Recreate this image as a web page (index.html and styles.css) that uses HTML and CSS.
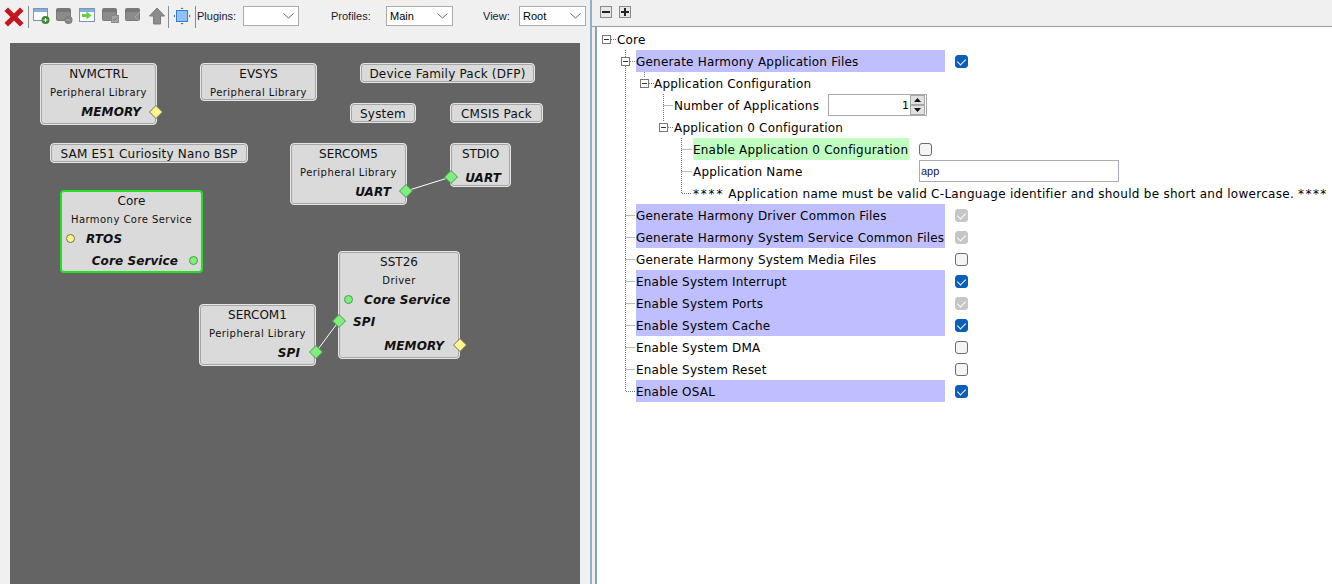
FILE: index.html
```html
<!DOCTYPE html>
<html lang="en">
<head>
    <meta charset="UTF-8">
    <meta name="viewport" content="width=device-width, initial-scale=1.0">
    <title>Project Graph</title>
    <link rel="stylesheet" href="styles.css">
</head>
<body>

    <!-- Project graph side -->
    <div id="graph-panel">
        <span class="tab-edge"></span>
        <div id="toolbar">
            <svg class="tool tool-close" width="20" height="20" viewBox="0 0 20 20">
                <path d="M4 4 L16 16 M16 4 L4 16" stroke="#c4161c" stroke-width="5" stroke-linecap="square"/>
            </svg>
            <span class="sep"></span>
            <svg class="tool" width="18" height="18" viewBox="0 0 18 18">
                <rect x="0.5" y="1.5" width="14" height="12" fill="#fff" stroke="#7d95ad"/>
                <rect x="1" y="2" width="13" height="3" fill="#86aedb"/>
                <circle cx="12.5" cy="13" r="4" fill="#3c8a34"/>
                <path d="M10.5 13 H14.5 M12.5 11 V15" stroke="#fff"/>
            </svg>
            <svg class="tool" width="18" height="18" viewBox="0 0 18 18">
                <rect x="0.5" y="1.5" width="14" height="12" rx="1" fill="#8b8b8b" stroke="#7a7a7a"/>
                <rect x="1" y="2" width="13" height="3" fill="#777"/>
                <circle cx="12.5" cy="13" r="4" fill="#808080"/>
                <path d="M10.5 13 H14.5" stroke="#b5b5b5"/>
            </svg>
            <svg class="tool" width="18" height="18" viewBox="0 0 18 18">
                <rect x="0.5" y="1.5" width="15" height="13" fill="#fff" stroke="#7d95ad"/>
                <rect x="1" y="2" width="14" height="3" fill="#86aedb"/>
                <path d="M3 7 H7.5 V4.5 L12.5 8.5 L7.5 12.5 V10 H3 Z" fill="#63d13f"/>
            </svg>
            <svg class="tool" width="18" height="18" viewBox="0 0 18 18">
                <rect x="0.5" y="1.5" width="14" height="12" rx="1" fill="#8b8b8b" stroke="#7a7a7a"/>
                <rect x="1" y="2" width="13" height="3" fill="#777"/>
                <rect x="9.5" y="8.5" width="7" height="7" fill="#a3a3a3" stroke="#8a8a8a"/>
                <path d="M11 12 L12.5 13.5 L15 10.5" stroke="#777" fill="none"/>
            </svg>
            <svg class="tool" width="18" height="18" viewBox="0 0 18 18">
                <rect x="0.5" y="1.5" width="14" height="12" rx="1" fill="#8b8b8b" stroke="#7a7a7a"/>
                <rect x="1" y="2" width="13" height="3" fill="#777"/>
                <path d="M15 5 L10 10 L14 14" stroke="#a9a9a9" fill="none"/>
            </svg>
            <svg class="tool" width="18" height="18" viewBox="0 0 18 18">
                <path d="M9 1 L16.5 9 H12.5 V17 H5.5 V9 H1.5 Z" fill="#8c8c8c" stroke="#7b7b7b"/>
            </svg>
            <span class="sep sep-a"></span>
            <svg class="tool tool-fit" width="18" height="18" viewBox="0 0 18 18">
                <rect x="3.5" y="3.5" width="11" height="11" fill="#8fc0f8" stroke="#3a7bd0"/>
                <path d="M9 0.5 L10.5 2 H7.5 Z M9 17.5 L7.5 16 H10.5 Z M0.5 9 L2 7.5 V10.5 Z M17.5 9 L16 10.5 V7.5 Z" fill="#2a66c4"/>
            </svg>
            <span class="sep sep-b"></span>
            <span class="tool-label label-plugins">Plugins:</span>
            <div class="combo combo-plugins">
                <span></span>
                <svg width="11" height="6" viewBox="0 0 11 6"><path d="M0.5 0.5 L5.5 5 L10.5 0.5" fill="none" stroke="#666"/></svg>
            </div>
            <span class="tool-label label-profiles">Profiles:</span>
            <div class="combo combo-main">
                <span>Main</span>
                <svg width="11" height="6" viewBox="0 0 11 6"><path d="M0.5 0.5 L5.5 5 L10.5 0.5" fill="none" stroke="#666"/></svg>
            </div>
            <span class="tool-label label-view">View:</span>
            <div class="combo combo-main">
                <span>Root</span>
                <svg width="11" height="6" viewBox="0 0 11 6"><path d="M0.5 0.5 L5.5 5 L10.5 0.5" fill="none" stroke="#666"/></svg>
            </div>
        </div>

        <div id="canvas">
            <div class="node node-nvmctrl">
                <div class="node-title">NVMCTRL</div>
                <div class="node-sub">Peripheral Library</div>
                <div class="port port-right">MEMORY</div>
            </div>
            <div class="node node-evsys">
                <div class="node-title">EVSYS</div>
                <div class="node-sub">Peripheral Library</div>
            </div>
            <div class="node node-flat node-dfp">Device Family Pack (DFP)</div>
            <div class="node node-flat node-system">System</div>
            <div class="node node-flat node-cmsis">CMSIS Pack</div>
            <div class="node node-flat node-bsp">SAM E51 Curiosity Nano BSP</div>
            <div class="node node-sercom5">
                <div class="node-title">SERCOM5</div>
                <div class="node-sub">Peripheral Library</div>
                <div class="port port-right">UART</div>
            </div>
            <div class="node node-stdio">
                <div class="node-title">STDIO</div>
                <div class="port port-right port-stdio">UART</div>
            </div>
            <div class="node node-selected node-core">
                <div class="node-title">Core</div>
                <div class="node-sub">Harmony Core Service</div>
                <div class="port port-left">RTOS</div>
                <div class="port port-right port-core">Core Service</div>
            </div>
            <div class="node node-sst26">
                <div class="node-title">SST26</div>
                <div class="node-sub">Driver</div>
                <div class="port port-left">Core Service</div>
                <div class="port port-left port-spi">SPI</div>
                <div class="port port-right port-mem">MEMORY</div>
            </div>
            <div class="node node-sercom1">
                <div class="node-title">SERCOM1</div>
                <div class="node-sub">Peripheral Library</div>
                <div class="port port-right">SPI</div>
            </div>

            <!-- wires and pins sit over the nodes -->
            <svg id="wires" width="570" height="541" viewBox="10 43 570 541">
                <path d="M406 191 L451 177 M316 352 L339 321" stroke="#fff" stroke-width="1"/>
                <path class="pin pin-green" d="M406 184.5 L412.5 191 L406 197.5 L399.5 191 Z"/>
                <path class="pin pin-green" d="M451 170.5 L457.5 177 L451 183.5 L444.5 177 Z"/>
                <path class="pin pin-green" d="M339 314.5 L345.5 321 L339 327.5 L332.5 321 Z"/>
                <path class="pin pin-green" d="M316 345.5 L322.5 352 L316 358.5 L309.5 352 Z"/>
                <path class="pin pin-yellow" d="M156 105.5 L162.5 112 L156 118.5 L149.5 112 Z"/>
                <path class="pin pin-yellow" d="M460 338.5 L466.5 345 L460 351.5 L453.5 345 Z"/>
                <circle class="pin pin-yellow" cx="70.5" cy="238.5" r="4"/>
                <circle class="pin pin-green" cx="193.5" cy="260.5" r="4"/>
                <circle class="pin pin-green" cx="348.5" cy="299.5" r="4"/>
            </svg>
        </div>
    </div>

    <!-- Configuration options side -->
    <div id="config-panel">
        <div id="config-bar">
            <button type="button" class="bar-btn">
                <svg width="8" height="8" viewBox="0 0 8 8"><path d="M0 4 H8" stroke="#222" stroke-width="2"/></svg>
            </button>
            <button type="button" class="bar-btn">
                <svg width="8" height="8" viewBox="0 0 8 8"><path d="M0 4 H8 M4 0 V8" stroke="#222" stroke-width="2"/></svg>
            </button>
        </div>

        <div id="tree">
            <div class="row lv-core"><span class="text">Core</span></div>

            <div class="row lv-1"><span class="text w-main hl-blue">Generate Harmony Application Files</span><span class="check on"></span></div>
            <div class="row lv-2"><span class="text">Application Configuration</span></div>
            <div class="row lv-3"><span class="text w-num">Number of Applications</span>
                <div class="spinner">
                    <input type="text" value="1">
                    <div class="spin-btns">
                        <button type="button"><svg width="7" height="4" viewBox="0 0 7 4"><path d="M3.5 0 L7 4 H0 Z" fill="#111"/></svg></button>
                        <button type="button"><svg width="7" height="4" viewBox="0 0 7 4"><path d="M0 0 H7 L3.5 4 Z" fill="#111"/></svg></button>
                    </div>
                </div>
            </div>
            <div class="row lv-3"><span class="text">Application 0 Configuration</span></div>
            <div class="row lv-4"><span class="text w-app hl-green">Enable Application 0 Configuration</span><span class="check"></span></div>
            <div class="row lv-4"><span class="text w-app">Application Name</span><input class="name-input" type="text" value="app"></div>
            <div class="row lv-4"><span class="text text-note"><span class="stars">****</span> Application name must be valid C-Language identifier and should be short and lowercase. <span class="stars stars-end">****</span></span></div>

            <div class="row lv-1"><span class="text w-main hl-blue">Generate Harmony Driver Common Files</span><span class="check off"></span></div>
            <div class="row lv-1"><span class="text w-main hl-blue">Generate Harmony System Service Common Files</span><span class="check off"></span></div>
            <div class="row lv-1"><span class="text w-main">Generate Harmony System Media Files</span><span class="check"></span></div>
            <div class="row lv-1"><span class="text w-main hl-blue">Enable System Interrupt</span><span class="check on"></span></div>
            <div class="row lv-1"><span class="text w-main hl-blue">Enable System Ports</span><span class="check off"></span></div>
            <div class="row lv-1"><span class="text w-main hl-blue">Enable System Cache</span><span class="check on"></span></div>
            <div class="row lv-1"><span class="text w-main">Enable System DMA</span><span class="check"></span></div>
            <div class="row lv-1"><span class="text w-main">Enable System Reset</span><span class="check"></span></div>
            <div class="row lv-1"><span class="text w-main hl-blue">Enable OSAL</span><span class="check on"></span></div>

            <!-- dotted tree guides, same coordinates as the window -->
            <svg id="guides" width="735" height="557" viewBox="597 27 735 557">
                <g class="dots">
                    <path d="M611 39.5 H617"/>
                    <path d="M625.5 50 V391.5 H635"/>
                    <path d="M630 61.5 H635"/>
                    <path d="M644.5 72 V78"/>
                    <path d="M649 83.5 H654"/>
                    <path d="M663.5 94 V122"/>
                    <path d="M663.5 105.5 H673"/>
                    <path d="M668 127.5 H673"/>
                    <path d="M681.5 138 V193.5 H692"/>
                    <path d="M681.5 149.5 H692"/>
                    <path d="M681.5 171.5 H692"/>
                    <path d="M625.5 215.5 H635"/>
                    <path d="M625.5 237.5 H635"/>
                    <path d="M625.5 259.5 H635"/>
                    <path d="M625.5 281.5 H635"/>
                    <path d="M625.5 303.5 H635"/>
                    <path d="M625.5 325.5 H635"/>
                    <path d="M625.5 347.5 H635"/>
                    <path d="M625.5 369.5 H635"/>
                </g>
                <g class="expander">
                    <rect x="602.5" y="35.5" width="8" height="8"/><path d="M604 39.5 H609"/>
                    <rect x="621.5" y="57.5" width="8" height="8"/><path d="M623 61.5 H628"/>
                    <rect x="640.5" y="79.5" width="8" height="8"/><path d="M642 83.5 H647"/>
                    <rect x="659.5" y="123.5" width="8" height="8"/><path d="M661 127.5 H666"/>
                </g>
            </svg>
        </div>
    </div>

</body>
</html>
```

FILE: styles.css
```css
/* General styling */
* {
    box-sizing: border-box;
}

html,
body {
    height: 100%;
}

body {
    font-family: "DejaVu Sans", Verdana, sans-serif;
    font-size: 12px;
    color: #000;
    background-color: #f0f0f0;
    margin: 0;
    display: flex;
    overflow: hidden;
}

/* Left panel */
#graph-panel {
    position: relative;
    width: 592px;
    flex: none;
    display: flex;
    flex-direction: column;
    border-right: 2px solid #8eb0d0;
}

.tab-edge {
    position: absolute;
    left: 322px;
    top: 0;
    width: 105px;
    height: 1px;
    background-color: #f4eeda;
}

#toolbar {
    height: 43px;
    flex: none;
    display: flex;
    align-items: flex-start;
    padding: 6px 0 0 4px;
}

.tool {
    flex: none;
    margin: 1px 5px 0 0;
}

.tool-close {
    margin-right: 4px;
}

.tool-fit {
    margin-right: 4px;
}

.sep {
    flex: none;
    width: 1px;
    height: 22px;
    background-color: #8c8c8c;
    margin: 0 4px 0 0;
}

.sep-a {
    margin-left: -3px;
}

.sep-b {
    margin-right: 1px;
}

.tool-label {
    flex: none;
    font-family: "Liberation Sans", Arial, sans-serif;
    font-size: 11px;
    line-height: 20px;
    color: #1a1a2e;
}

.label-plugins {
    width: 46px;
}

.label-profiles {
    margin-left: 32px;
    width: 55px;
}

.label-view {
    margin-left: 30px;
    width: 36px;
}

.combo {
    flex: none;
    height: 20px;
    display: flex;
    align-items: center;
    justify-content: space-between;
    background-color: #fff;
    border: 1px solid #ababab;
    font-family: "Liberation Sans", Arial, sans-serif;
    font-size: 11px;
    padding: 0 4px 0 3px;
}

.combo-plugins {
    width: 56px;
}

.combo-main {
    width: 67px;
}

#canvas {
    flex: 1;
    position: relative;
    margin: 0 10px;
    background-color: #646464;
}

#wires {
    position: absolute;
    left: 0;
    top: 0;
    pointer-events: none;
}

.pin {
    stroke-width: 1;
}

.pin-green {
    fill: #7eee7e;
    stroke: #4c9b4c;
}

.pin-yellow {
    fill: #fdf58e;
    stroke: #77744a;
}

/* Graph nodes */
.node {
    position: absolute;
    background-color: #dadada;
    border: 1px solid #e6e6e6;
    box-shadow: inset 0 0 0 1px #a6a6a6;
    border-radius: 4px;
    padding: 1px;
    text-align: center;
    color: #111;
}

.node-flat {
    font-size: 12px;
    line-height: 18px;
    letter-spacing: 0.2px;
    white-space: nowrap;
    height: 20px;
}

.node-selected {
    border: 2px solid #22e022;
    box-shadow: none;
    padding: 0;
}

/* where each node sits on the canvas */
.node-nvmctrl { left: 30px; top: 20px; width: 117px; height: 62px; }
.node-evsys { left: 190px; top: 20px; width: 117px; height: 38px; }
.node-dfp { left: 350px; top: 20px; width: 175px; }
.node-system { left: 340px; top: 60px; width: 66px; }
.node-cmsis { left: 440px; top: 60px; width: 93px; }
.node-bsp { left: 40px; top: 100px; width: 198px; }
.node-sercom5 { left: 280px; top: 100px; width: 117px; height: 62px; }
.node-stdio { left: 440px; top: 100px; width: 61px; height: 44px; }
.node-core { left: 50px; top: 147px; width: 143px; height: 83px; }
.node-sst26 { left: 328px; top: 208px; width: 122px; height: 108px; }
.node-sercom1 { left: 189px; top: 261px; width: 117px; height: 62px; }

.node-title {
    font-size: 12px;
    line-height: 18px;
    white-space: nowrap;
}

.node-sub {
    font-size: 10px;
    line-height: 18px;
    padding-top: 1px;
    letter-spacing: 0.45px;
    white-space: nowrap;
}

.port {
    font-weight: bold;
    font-style: italic;
    font-size: 12px;
    line-height: 20px;
    letter-spacing: 0.1px;
    white-space: nowrap;
}

.port-right {
    text-align: right;
    padding-right: 14px;
}

.port-left {
    text-align: left;
    padding-left: 24px;
}

.port-stdio {
    margin-top: 5px;
    padding-right: 8px;
}

.port-core {
    padding-right: 23px;
    margin-top: 2px;
}

.port-spi {
    padding-left: 13px;
    margin-top: 2px;
}

.port-mem {
    margin-top: 4px;
    padding-right: 14px;
}

/* Right panel */
#config-panel {
    flex: 1;
    min-width: 0;
    display: flex;
    flex-direction: column;
}

#config-bar {
    height: 27px;
    flex: none;
    display: flex;
    gap: 7px;
    align-items: flex-start;
    padding: 6px 0 0 8px;
    border-bottom: 1px solid #9a9aa6;
}

.bar-btn {
    width: 12px;
    height: 12px;
    padding: 0;
    display: flex;
    align-items: center;
    justify-content: center;
    background-color: #e8e8e8;
    border: 1px solid #8a8a8a;
}

#tree {
    flex: 1;
    position: relative;
    margin-left: 3px;
    padding-top: 1px;
    background-color: #fff;
    border-left: 2px solid #8f9fb3;
    font-size: 12px;
}

#guides {
    position: absolute;
    left: 0;
    top: 0;
    pointer-events: none;
}

.dots path {
    fill: none;
    stroke: #777;
    stroke-dasharray: 1 1;
}

.expander rect {
    fill: #fff;
    stroke: #777;
}

.expander path {
    stroke: #333;
}

/* Tree rows */
.row {
    height: 22px;
    display: flex;
    align-items: center;
    white-space: nowrap;
}

.lv-core {
    padding-left: 20px;
}

.lv-1 {
    padding-left: 39px;
}

.lv-2 {
    padding-left: 57px;
}

.lv-3 {
    padding-left: 77px;
}

.lv-4 {
    padding-left: 96px;
}

.text {
    display: block;
    height: 22px;
    line-height: 24px;
    letter-spacing: 0.2px;
    flex: none;
}

.text-note {
    letter-spacing: 0.28px;
}

.stars {
    letter-spacing: 1.8px;
}

.stars-end {
    letter-spacing: 1.4px;
}

.w-main {
    width: 309px;
}

.w-num {
    width: 154px;
}

.w-app {
    width: 216px;
    margin-right: 10px;
}

.hl-blue {
    background-color: #bfbfff;
}

.hl-green {
    background-color: #bfffbf;
}

.check {
    position: relative;
    flex: none;
    width: 13px;
    height: 13px;
    margin-left: 10px;
    border: 1px solid #6b6b6b;
    border-radius: 3px;
    background-color: #f4f4f4;
}

.w-app + .check {
    margin-left: 0;
}

.check.on {
    background-color: #0b5fb9;
    border-color: #0b5fb9;
}

.check.off {
    background-color: #c6c6c6;
    border-color: #c6c6c6;
}

.check.on::after,
.check.off::after {
    content: "";
    position: absolute;
    left: 3px;
    top: 1px;
    width: 4px;
    height: 7px;
    border: solid #fff;
    border-width: 0 1px 1px 0;
    transform: rotate(45deg);
}

.spinner {
    width: 99px;
    height: 22px;
    display: flex;
    align-items: center;
    background-color: #fff;
    border: 1px solid #a9a9a9;
}

.spinner input {
    flex: 1;
    min-width: 0;
    height: 18px;
    padding: 0 1px 0 0;
    border: none;
    outline: none;
    text-align: right;
    font-family: inherit;
    font-size: 11px;
}

.spin-btns {
    flex: none;
    width: 15px;
    display: flex;
    flex-direction: column;
    margin-right: 1px;
}

.spin-btns button {
    height: 10px;
    padding: 0;
    display: flex;
    align-items: center;
    justify-content: center;
    background-color: #e1e1e1;
    border: 1px solid #a9a9a9;
}

.name-input {
    width: 200px;
    height: 22px;
    padding: 0 1px;
    border: 1px solid #ababb5;
    outline: none;
    font-family: "Liberation Sans", Arial, sans-serif;
    font-size: 11px;
    color: #1a1a40;
}
```
